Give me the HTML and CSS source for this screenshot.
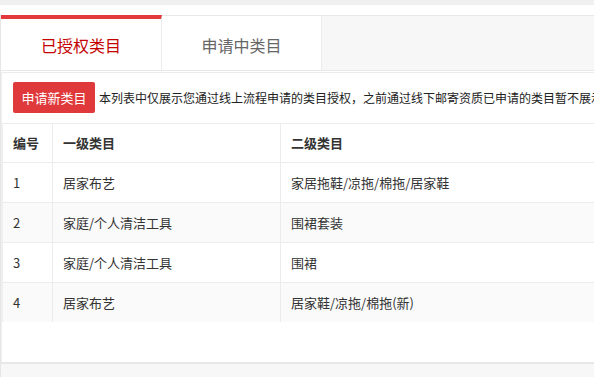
FILE: index.html
```html
<!DOCTYPE html>
<html lang="zh">
<head>
<meta charset="utf-8">
<link rel="stylesheet" href="styles.css">
</head>
<body>
<div class="topband"></div>
<div class="page">
  <div class="tabs">
    <div class="tab active">已授权类目</div>
    <div class="tab">申请中类目</div>
    <div class="tab-rest"></div>
  </div>
  <div class="panel">
    <div class="toolbar">
      <button class="btn">申请新类目</button>
      <span class="desc">本列表中仅展示您通过线上流程申请的类目授权，之前通过线下邮寄资质已申请的类目暂不展示</span>
    </div>
    <table class="grid">
      <thead>
        <tr><th class="c1">编号</th><th class="c2">一级类目</th><th class="c3">二级类目</th></tr>
      </thead>
      <tbody>
        <tr><td>1</td><td>居家布艺</td><td>家居拖鞋/凉拖/棉拖/居家鞋</td></tr>
        <tr><td>2</td><td>家庭/个人清洁工具</td><td>围裙套装</td></tr>
        <tr><td>3</td><td>家庭/个人清洁工具</td><td>围裙</td></tr>
        <tr><td>4</td><td>居家布艺</td><td>居家鞋/凉拖/棉拖(新)</td></tr>
      </tbody>
    </table>
    <div class="empty"></div>
  </div>
  <div class="footer"></div>
</div>
</body>
</html>
```
FILE: styles.css
```css
html, body {
  margin: 0;
  padding: 0;
  overflow: hidden;
  background: #fff;
}
body {
  font-family: "Microsoft YaHei", "Noto Sans CJK SC", "Noto Sans", sans-serif;
  color: #333;
  width: 594px;
  height: 377px;
}
.topband {
  height: 5px;
  background: #f0f0f0;
}
.page {
  margin-top: 10px;
  width: 900px;
  border-left: 1px solid #e6e6e6;
}
.tabs {
  display: flex;
  height: 56px;
  border-top: 1px solid #e8e8e8;
  border-bottom: 1px solid #e8e8e8;
  box-sizing: border-box;
}
.tab {
  width: 160px;
  flex: none;
  box-sizing: border-box;
  display: flex;
  align-items: center;
  justify-content: center;
  font-size: 16px;
  line-height: 20px;
  color: #666;
  background: #fff;
  border-right: 1px solid #ececec;
  padding-top: 4px;
}
.tab.active {
  color: #c40000;
  border-top: 4px solid #e4393c;
  margin-top: -1px;
  padding-top: 0;
  width: 161px;
}
.tab-rest {
  flex: 1;
  background: #f7f7f7;
}
.panel {
  margin-top: 1px;
  border-top: 1px solid #ececec;
  border-left: 1px solid #efefef;
}
.toolbar {
  display: flex;
  align-items: center;
  padding: 9px 0 10px 11px;
  gap: 4px;
  white-space: nowrap;
}
.btn {
  width: 82px;
  height: 31px;
  border: none;
  border-radius: 2px;
  background: #e0393b;
  color: #fff;
  font-family: inherit;
  font-size: 13px;
  padding: 0;
  line-height: 31px;
}
.desc {
  font-size: 12px;
  color: #222;
  line-height: 16px;
}
.grid {
  border-collapse: collapse;
  width: 100%;
  font-size: 13px;
  border-left: 1px solid #efefef;
}
.grid th, .grid td {
  text-align: left;
  padding: 0 10px;
  border-top: 1px solid #ececec;
  border-right: 1px solid #ececec;
  line-height: 18px;
}
.grid th {
  height: 38px;
  font-weight: bold;
  color: #333;
}
.grid td {
  height: 38px;
  color: #333;
  padding-top: 1px;
}
.grid tbody tr:nth-child(even) td {
  background: #fafafa;
}
.grid .c1 { width: 29px; }
.grid .c2 { width: 207px; }
.empty {
  height: 40px;
}
.footer {
  border-top: 2px solid #e8e8e8;
  height: 20px;
  background: #f7f7f7;
}
```
